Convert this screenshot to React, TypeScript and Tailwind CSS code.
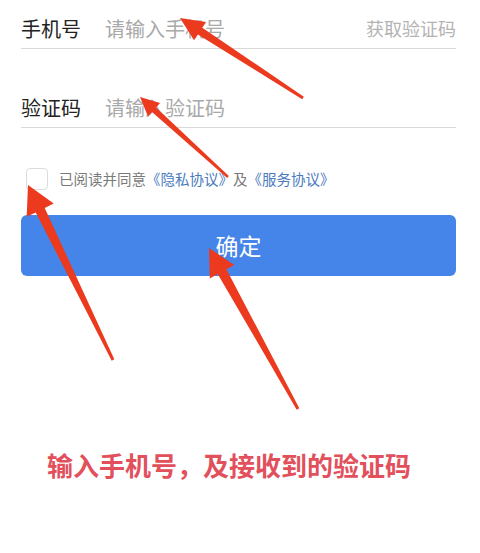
import React from 'react';

type Pt = [number, number];

interface ArrowSpec {
  tip: Pt;
  tail: Pt;
  head: number;
  half: number;
  w0: number;
  w1: number;
}

const arrows: ArrowSpec[] = [
  { tip: [180, 18], tail: [303, 98], head: 24, half: 11, w0: 3, w1: 8 },
  { tip: [140, 97], tail: [228, 177], head: 19, half: 9, w0: 2.5, w1: 6 },
  { tip: [28, 185], tail: [113, 360], head: 28, half: 15, w0: 3, w1: 10 },
  { tip: [209, 248], tail: [298, 409], head: 27, half: 14, w0: 3, w1: 10 }
];

function arrowPoints({ tip, tail, head, half, w0, w1 }: ArrowSpec) {
  const dx = tip[0] - tail[0];
  const dy = tip[1] - tail[1];
  const len = Math.hypot(dx, dy);
  const ux = dx / len;
  const uy = dy / len;
  const nx = -uy;
  const ny = ux;
  const bx = tip[0] - ux * head;
  const by = tip[1] - uy * head;
  const pts: Pt[] = [
    [tail[0] + nx * w0 / 2, tail[1] + ny * w0 / 2],
    [bx + nx * w1 / 2, by + ny * w1 / 2],
    [bx + nx * half, by + ny * half],
    tip,
    [bx - nx * half, by - ny * half],
    [bx - nx * w1 / 2, by - ny * w1 / 2],
    [tail[0] - nx * w0 / 2, tail[1] - ny * w0 / 2]
  ];
  return pts.map((p) => `${p[0].toFixed(1)},${p[1].toFixed(1)}`).join(' ');
}

export default function App() {
  return (
    <div className="relative w-[480px] h-[553px] bg-white overflow-hidden font-['Noto_Sans_CJK_SC','Noto_Sans',sans-serif]">
      <div className="pl-[21px] pr-[24px]">
        <div className="mt-[9px] h-[40px] flex items-center border-b border-[#d9d9d9]">
          <span className="w-[84px] text-[20px] text-[#222]">手机号</span>
          <input
            type="tel"
            placeholder="请输入手机号"
            className="flex-1 min-w-0 text-[20px] text-[#222] placeholder:text-[#a9a9a9] outline-none bg-transparent" />
          <span className="text-[18px] text-[#b3b3b3]">获取验证码</span>
        </div>

        <div className="mt-[39px] h-[40px] flex items-center border-b border-[#d9d9d9]">
          <span className="w-[84px] text-[20px] text-[#222]">验证码</span>
          <input
            type="text"
            placeholder="请输入验证码"
            className="flex-1 min-w-0 text-[20px] text-[#222] placeholder:text-[#a9a9a9] outline-none bg-transparent" />
        </div>

        <div className="mt-[40px] h-[22px] flex items-center pl-[5px]">
          <span className="w-[22px] h-[22px] rounded-[4px] border border-[#dcdcdc] bg-white" />
          <span className="ml-[11px] text-[14.5px] text-[#7a7a7a] whitespace-nowrap">
            已阅读并同意<span className="text-[#4b7bbd]">《隐私协议》</span>及<span className="text-[#4b7bbd]">《服务协议》</span>
          </span>
        </div>

        <button
          type="button"
          className="mt-[25px] w-full h-[61px] rounded-[6px] bg-[#4584e8] text-white text-[23px] flex items-center justify-center">
          确定
        </button>
      </div>

      <p className="mt-[174px] pl-[47px] text-[26px] font-bold text-[#e2505c] leading-[30px] whitespace-nowrap">
        输入手机号，及接收到的验证码
      </p>

      <svg className="absolute inset-0 pointer-events-none" width="480" height="553" viewBox="0 0 480 553">
        {arrows.map((a, i) =>
        <polygon key={i} points={arrowPoints(a)} fill="#ec3a1f" strokeLinejoin="round" />
        )}
      </svg>
    </div>);

}
